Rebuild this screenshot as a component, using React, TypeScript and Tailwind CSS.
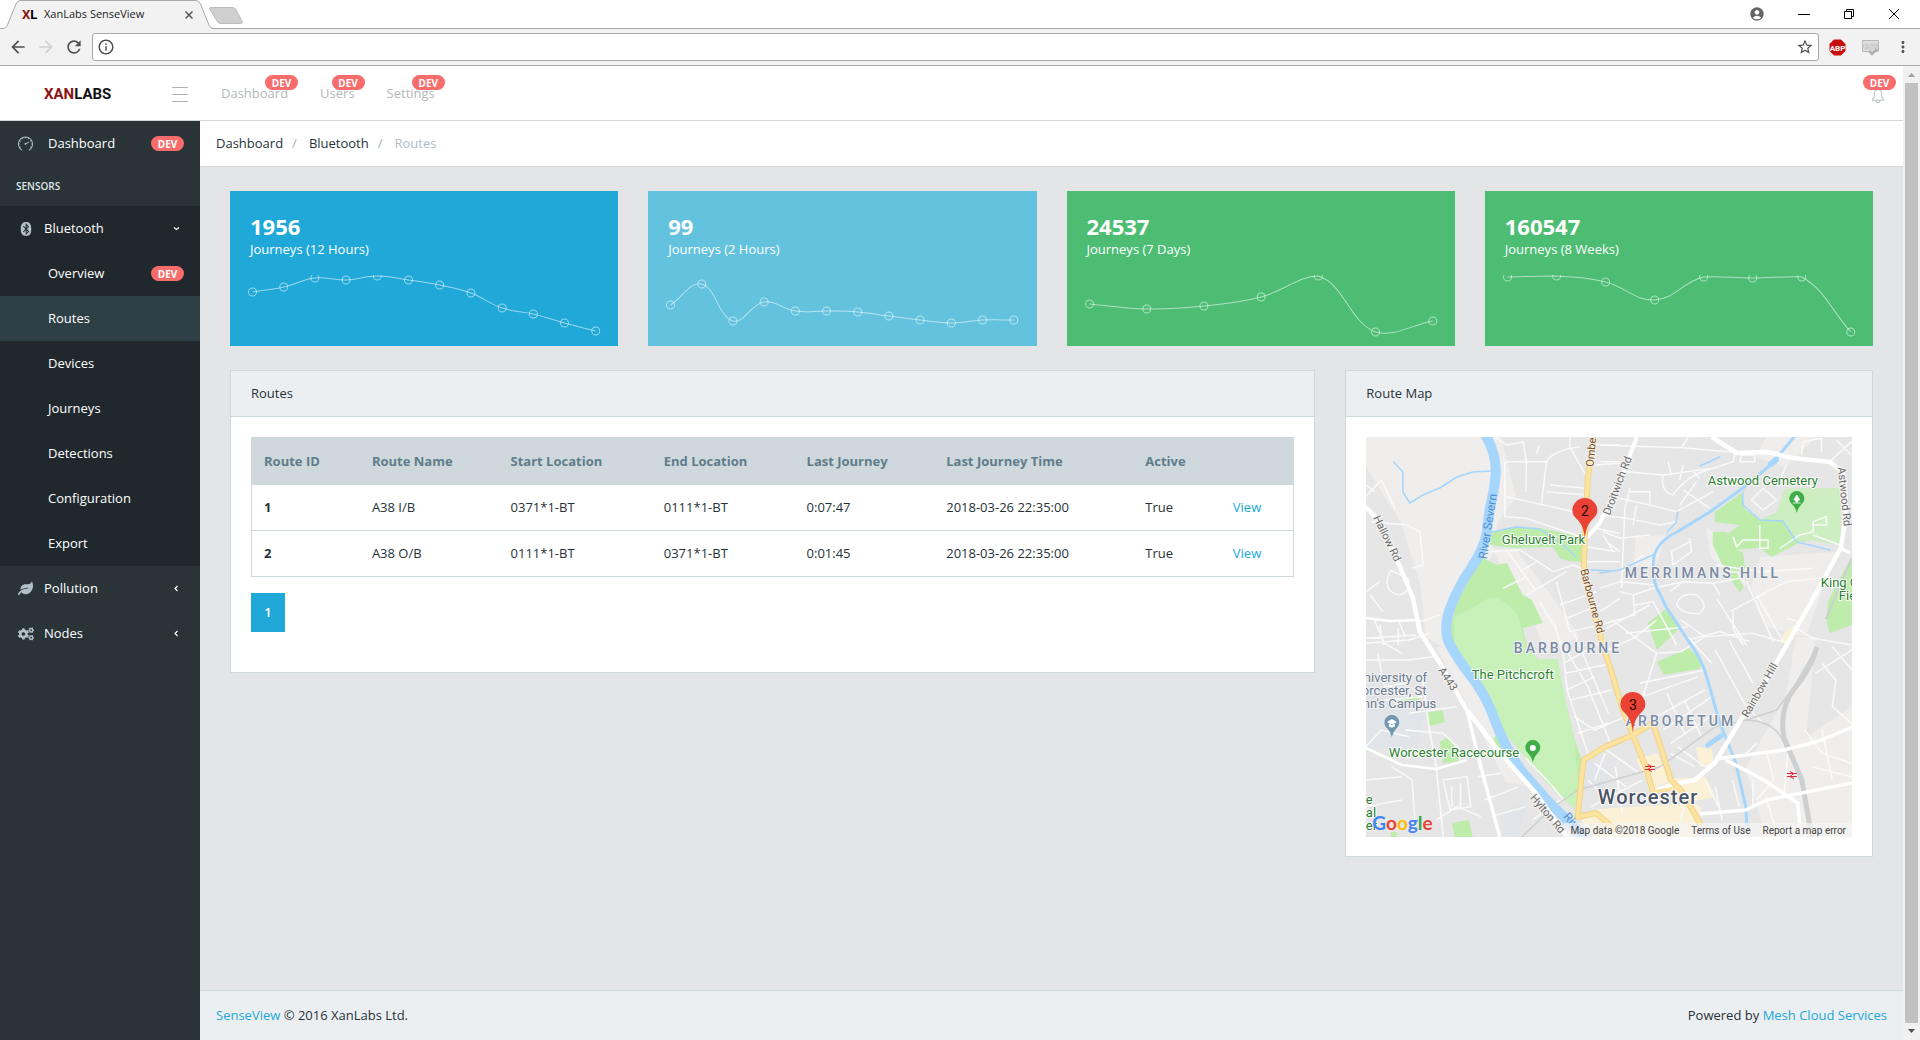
import React from "react";
import { FaBluetooth, FaCogs, FaLeaf } from "react-icons/fa";
import {
  MdAccountCircle,
  MdArrowBack,
  MdArrowForward,
  MdInfoOutline,
  MdMoreVert,
  MdRefresh,
  MdStarBorder,
} from "react-icons/md";
import { SlBell, SlSpeedometer } from "react-icons/sl";

/* ---------- shared ---------- */

function DevBadge() {
  return (
    <span className="flex h-[15px] w-[33px] items-center justify-center rounded-full bg-[#f86c6b] text-[10px] leading-none font-bold text-white">
      DEV
    </span>
  );
}

/* ---------- browser chrome ---------- */

function TabStrip() {
  return (
    <div className="relative flex h-7 items-center bg-white">
      <svg className="absolute top-0 left-0 h-[29px] w-[260px]" viewBox="0 0 260 29" fill="none">
        <path d="M0 28.500H3Q6 28.500 7.500 25L16 4Q17.500 .5 20 .5H196Q199 .5 200.500 4L209 25Q210.500 28.500 213 28.500V29H0Z" fill="#f2f2f2" />
        <path d="M0 28.500H3Q6 28.500 7.500 25L16 4Q17.500 .5 20 .5H196Q199 .5 200.500 4L209 25Q210.500 28.500 213 28.500H260" stroke="#a9a9a9" />
        <path d="M211 7.500H232Q235 7.500 236 9.500L242 21Q243.500 23.500 240.500 23.500H221Q218 23.500 217 21L210 9.500Q208.500 7.500 211 7.500Z" fill="#cfcfcf" stroke="#bcbcbc" />
      </svg>
      <div className="relative flex w-[195px] items-center pt-px pl-[22px] text-[11px] text-[#222]">
        <span className="w-[22px] font-['Roboto',sans-serif] text-[13px] font-bold text-black">
          <span className="text-[#8c1414]">X</span>L
        </span>
        <span className="flex-1">XanLabs SenseView</span>
        <button aria-label="Close tab" className="flex size-3 items-center justify-center">
          <svg viewBox="0 0 8 8" className="size-2" stroke="#555" strokeWidth="1.500">
            <path d="M.5 .5l7 7M7.500 .5l-7 7" />
          </svg>
        </button>
      </div>
      <div className="ml-auto flex items-center gap-[33px] pr-5">
        <button aria-label="Profile">
          <MdAccountCircle className="size-4 text-[#666]" />
        </button>
        <button aria-label="Minimize" className="flex h-4 w-3 items-center">
          <span className="h-px w-full bg-black" />
        </button>
        <button aria-label="Restore">
          <svg viewBox="0 0 12 12" className="size-3" fill="none" stroke="#000">
            <path d="M1.500 3.500h7v7h-7zM3.500 3.500v-2h7v7h-2" />
          </svg>
        </button>
        <button aria-label="Close">
          <svg viewBox="0 0 12 12" className="size-3" stroke="#000">
            <path d="M1 1l10 10M11 1L1 11" />
          </svg>
        </button>
      </div>
    </div>
  );
}

function Toolbar() {
  return (
    <div className="flex h-[38px] items-center border-t border-b border-[#a9a9a9] bg-[#f2f2f2] px-2 text-[#505050]">
      <div className="flex w-[84px] items-center gap-2">
        <button aria-label="Back">
          <MdArrowBack className="size-5" />
        </button>
        <button aria-label="Forward">
          <MdArrowForward className="size-5 text-[#d0d0d0]" />
        </button>
        <button aria-label="Reload">
          <MdRefresh className="size-5" />
        </button>
      </div>
      <div className="flex h-7 flex-1 items-center gap-2 rounded-[3px] border border-[#a9a9a9] bg-white px-1">
        <MdInfoOutline className="size-[18px]" />
        <input aria-label="Address" className="h-full flex-1 text-[13px] outline-none" />
        <button aria-label="Bookmark this page">
          <MdStarBorder className="size-[18px]" />
        </button>
      </div>
      <div className="flex w-[93px] items-center justify-between pl-[10px]">
        <button aria-label="Ad block">
          <svg viewBox="0 0 17 17" className="size-[17px]">
            <path d="M5 .5h7L16.500 5v7L12 16.500H5L.5 12V5Z" fill="#c70d0d" />
            <text x="8.500" y="11.500" textAnchor="middle" fontSize="8" fontWeight="700" fill="#fff" fontFamily="Roboto, sans-serif">
              ABP
            </text>
          </svg>
        </button>
        <button aria-label="Style editor">
          <svg viewBox="0 0 17 17" className="size-[17px]">
            <path d="M.5 1.500h16v11h-4l-3 3-3-3h-6z" fill="#dedede" stroke="#b9b9b9" />
            <path d="M7 12l3 3 6-6" fill="none" stroke="#b0b0b0" strokeWidth="2.500" />
            <text x="8.500" y="9.500" textAnchor="middle" fontSize="8" fontWeight="700" fill="#fff" stroke="#a8a8a8" strokeWidth=".4" fontFamily="Roboto, sans-serif">
              CSS
            </text>
          </svg>
        </button>
        <button aria-label="Menu">
          <MdMoreVert className="size-[18px]" />
        </button>
      </div>
    </div>
  );
}

function Scrollbar() {
  return (
    <div aria-hidden="true" className="flex w-[17px] shrink-0 flex-col items-center bg-[#f1f1f1]">
      <svg viewBox="0 0 17 17" className="size-[17px]">
        <path d="M5 11h7L8.500 7z" fill="#a0a0a0" />
      </svg>
      <div className="w-[13px] flex-1 bg-[#c1c1c1]" />
      <svg viewBox="0 0 17 17" className="size-[17px]">
        <path d="M5 6h7l-3.500 4z" fill="#505050" />
      </svg>
    </div>
  );
}

/* ---------- header ---------- */

const topLinks = ["Dashboard", "Users", "Settings"];

function Header() {
  return (
    <header className="flex h-[55px] items-center border-b border-[#d3d8da] bg-white pt-[2px]">
      <a href="#" className="w-[158px] pl-[44px] font-['Roboto',sans-serif] text-[15px] font-bold text-[#111]">
        <span className="text-[#8c1414]">XAN</span>LABS
      </a>
      <button aria-label="Toggle sidebar" className="ml-[14px] flex w-4 flex-col gap-[6px]">
        <span className="h-px w-full bg-[#aeb4b7]" />
        <span className="h-px w-full bg-[#aeb4b7]" />
        <span className="h-px w-full bg-[#aeb4b7]" />
      </button>
      <nav className="flex gap-8 pl-[33px]">
        {topLinks.map((label) => (
          <a key={label} href="#" className="relative text-[#b3b8ba]">
            {label}
            <span className="absolute -top-[9px] left-full -ml-[23px]">
              <DevBadge />
            </span>
          </a>
        ))}
      </nav>
      <button aria-label="Notifications" className="relative mr-[18px] ml-auto flex h-5 items-center pt-[3px]">
        <SlBell className="size-[14px] text-[#b9bec0]" />
        <span className="absolute -top-[9px] -right-[11px]">
          <DevBadge />
        </span>
      </button>
    </header>
  );
}

/* ---------- sidebar ---------- */

const subItems = [
  { label: "Overview", dev: true },
  { label: "Routes", active: true },
  { label: "Devices" },
  { label: "Journeys" },
  { label: "Detections" },
  { label: "Configuration" },
  { label: "Export" },
];

function Chevron({ open }: { open?: boolean }) {
  return (
    <svg viewBox="0 0 7 7" className="size-[7px]" fill="none" stroke="#fff" strokeWidth="1.200">
      <path d={open ? "M1 2.500l2.500 2 2.500-2" : "M4.500 1l-2.500 2.500 2.500 2.500"} />
    </svg>
  );
}

function Group({ icon, label, open }: { icon: React.ReactNode; label: string; open?: boolean }) {
  return (
    <button className="flex h-[45px] w-full items-center pr-5 pl-[18px] text-left">
      <span className="flex w-[26px] items-center text-[#b4c0c8]">{icon}</span>
      <span className="flex-1">{label}</span>
      <Chevron open={open} />
    </button>
  );
}

function Sidebar() {
  return (
    <aside className="w-[200px] shrink-0 bg-[#293338] text-white">
      <a href="#" className="flex h-[45px] items-center pr-4 pl-[18px]">
        <span className="w-[30px] text-[#b4c0c8]">
          <SlSpeedometer className="size-[15px]" />
        </span>
        <span className="flex-1">Dashboard</span>
        <DevBadge />
      </a>
      <h2 className="flex h-10 items-center px-4 text-[10px] font-semibold text-[#dfe5e8]">SENSORS</h2>
      <div className="bg-[#20282d]">
        <Group icon={<FaBluetooth className="ml-px size-[14px]" />} label="Bluetooth" open />
        {subItems.map((item) => (
          <a
            key={item.label}
            href="#"
            className={
              item.active
                ? "flex h-[45px] items-center justify-between bg-[#2f3f46] pr-4 pl-12"
                : "flex h-[45px] items-center justify-between pr-4 pl-12"
            }
          >
            {item.label}
            {item.dev && <DevBadge />}
          </a>
        ))}
      </div>
      <Group icon={<FaLeaf className="size-[15px]" />} label="Pollution" />
      <Group icon={<FaCogs className="size-4" />} label="Nodes" />
    </aside>
  );
}

/* ---------- stat cards ---------- */

type Stat = { value: string; label: string; tone: string; points: number[] };

const stats: Stat[] = [
  { value: "1956", label: "Journeys (12 Hours)", tone: "bg-[#20a8d8]", points: [17, 12, 3, 5, 1, 5, 10, 18, 33, 39, 48, 56] },
  { value: "99", label: "Journeys (2 Hours)", tone: "bg-[#63c2de]", points: [30, 9, 46, 27, 36, 36, 37, 41, 45, 48, 45, 45] },
  { value: "24537", label: "Journeys (7 Days)", tone: "bg-[#4dbd74]", points: [29, 34, 31, 22, 1, 57, 46] },
  { value: "160547", label: "Journeys (8 Weeks)", tone: "bg-[#4dbd74]", points: [2, 1, 7, 25, 2, 3, 2, 57] },
];

function smoothPath(pts: { x: number; y: number }[]) {
  const tension = 0.4;
  const clamp = (y: number) => Math.max(1, Math.min(62, y));
  const handles = pts.map((p, i) => {
    const prev = pts[i - 1] ?? p;
    const next = pts[i + 1] ?? p;
    const d01 = Math.hypot(p.x - prev.x, p.y - prev.y);
    const d12 = Math.hypot(next.x - p.x, next.y - p.y);
    const fa = (tension * d01) / (d01 + d12);
    const fb = (tension * d12) / (d01 + d12);
    return {
      inX: p.x - fa * (next.x - prev.x),
      inY: clamp(p.y - fa * (next.y - prev.y)),
      outX: p.x + fb * (next.x - prev.x),
      outY: clamp(p.y + fb * (next.y - prev.y)),
    };
  });
  return pts
    .map((p, i) =>
      i === 0
        ? `M${p.x} ${p.y}`
        : `C${handles[i - 1].outX} ${handles[i - 1].outY} ${handles[i].inX} ${handles[i].inY} ${p.x} ${p.y}`,
    )
    .join("");
}

function StatCard({ stat }: { stat: Stat }) {
  const step = 343 / (stat.points.length - 1);
  const pts = stat.points.map((y, i) => ({ x: 2.5 + i * step, y }));
  return (
    <section className={`${stat.tone} px-5 pt-5 pb-px text-white`}>
      <h3 className="text-[22px] leading-[30px] font-bold">{stat.value}</h3>
      <p className="leading-4 font-medium">{stat.label}</p>
      <svg viewBox="0 0 348 70" className="mt-[18px] block w-full overflow-visible" fill="none" stroke="#fff" strokeOpacity=".55">
        <clipPath id={`clip-${stat.value}`}>
          <rect x="-6" y="0" width="360" height="70" />
        </clipPath>
        <g clipPath={`url(#clip-${stat.value})`}>
          <path d={smoothPath(pts)} />
          {pts.map((p) => (
            <circle key={p.x} cx={p.x} cy={p.y} r="4" />
          ))}
        </g>
      </svg>
    </section>
  );
}

/* ---------- routes table ---------- */

const columns = [
  { label: "Route ID", width: "w-[10.400%]" },
  { label: "Route Name", width: "w-[13.300%]" },
  { label: "Start Location", width: "w-[14.700%]" },
  { label: "End Location", width: "w-[13.700%]" },
  { label: "Last Journey", width: "w-[13.400%]" },
  { label: "Last Journey Time", width: "w-[19.100%]" },
  { label: "Active", width: "w-[8.400%]" },
];

const rows = [
  ["1", "A38 I/B", "0371*1-BT", "0111*1-BT", "0:07:47", "2018-03-26 22:35:00", "True"],
  ["2", "A38 O/B", "0111*1-BT", "0371*1-BT", "0:01:45", "2018-03-26 22:35:00", "True"],
];

function RoutesPanel() {
  return (
    <section className="col-span-8 self-start border border-[#cfd8dc] bg-white">
      <h2 className="border-b border-[#cfd8dc] bg-[#eceff1] px-5 py-[13px] leading-[19px]">Routes</h2>
      <div className="px-5 pt-5 pb-10">
        <table className="w-full table-fixed border-collapse border border-[#cfd8dc] text-left">
          <thead className="bg-[#cfd8dc] text-[#607d8b]">
            <tr className="h-[47px]">
              {columns.map((c) => (
                <th key={c.label} scope="col" className={`${c.width} px-3 font-bold`}>
                  {c.label}
                </th>
              ))}
              <th aria-label="Actions" />
            </tr>
          </thead>
          <tbody>
            {rows.map((row) => (
              <tr key={row[0]} className="h-[46px] border-b border-[#cfd8dc]">
                <th scope="row" className="px-3 font-bold">
                  {row[0]}
                </th>
                {row.slice(1).map((cell, i) => (
                  <td key={i} className="px-3">
                    {cell}
                  </td>
                ))}
                <td className="px-3">
                  <a href="#" className="text-[#20a8d8]">
                    View
                  </a>
                </td>
              </tr>
            ))}
          </tbody>
        </table>
        <button aria-current="page" className="mt-4 block h-[39px] w-[34px] bg-[#20a8d8] font-semibold text-white">
          1
        </button>
      </div>
    </section>
  );
}

/* ---------- map ---------- */

const parks = [
  "M126 95L147 90 174 91 207 98 219 101 217 125 203 124 194 121 187 110 147 111 124 108Z",
  "M117 121L131 128 141 126 157 158 166 163 177 186 157 191 161 208 172 222 192 222 194 236 200 266 208 300 217 326 213 350 209 372 181 346 162 323 139 296 129 270 112 243 89 213 84 195 92 161 104 138Z",
  "M349 75L376 56 379 72 394 83 411 76 419 52 474 51 475 108 445 103 431 107 406 120 394 111 367 113 361 98 374 88 349 85Z",
  "M347 95L361 95 367 111 377 115 380 135 359 133 347 108Z",
  "M364 136H371L378 150 374 155 367 145Z",
  "M486 121L480 130 462 165 461 186 464 196 486 188Z",
  "M282 186L301 171 314 191 291 213Z",
  "M291 225L323 211 337 226 333 232 298 238Z",
  "M60 276L77 273 79 285 64 289Z",
  "M74 305L82 300 91 313 93 325 77 326Z",
  "M86 386L103 383 107 400H89Z",
  "M25 395H31V400H25Z",
  "M128 300L134 298 140 316 128 306Z",
  "M34 263L52 258 53 264 40 266Z",
];

const brooks =
  "M28 25L37 35 37 55 44 66 57 58 74 51 91 40 107 35 126 34M377 55V68L394 83 417 84 431 105 464 113M334 29L354 20M312 75L310 86 301 95M234 136L254 133 289 117M126 95L150 90 174 92 190 103 200 110 210 120M225 133L250 134";

const streetsNorthWest =
  "M78 395L125 345 165 430M78 360L105 380M95 470L200 480 240 500 250 600 215 610M150 620Q125 680 180 690Q215 680 205 640L150 615M90 690L130 740M78 680L120 650M175 790V840M120 780L130 840M78 820L230 810M240 770L300 750M495 290V455L560 460 735 520M500 395L700 440M560 290L558 380M495 290H620M605 415L620 290Q640 255 720 245M690 216V245L740 335M500 240L550 230 560 290M620 380L740 390M630 360L735 370M450 560L540 555 640 620 700 600 735 615M500 555L590 680M540 620L590 590M490 670L560 635M560 690L680 620M650 650L690 800 780 780M660 720L770 680M680 760L780 720M600 710L640 780M735 590L840 590M740 545L830 560M765 490L840 505M790 510L820 560M770 240H840M765 300L840 295M465 216L500 240M590 265L600 240";

const streetsNorthEast =
  "M0 240L250 248 400 262M0 290H60M80 320L190 330 340 310 400 290 405 265M190 330Q180 380 220 390Q260 330 340 310M245 248L265 216M90 370L75 430 65 670M60 400L150 420 230 440 340 380M150 420V380H90M0 450L80 460 180 480 230 470M10 500L60 520 150 510M20 530L60 560M0 670L60 650L170 660M60 680L100 690 105 750 0 780M100 690L160 670 250 650 340 655 420 640M105 720L160 710 230 840M210 680L250 650M230 720Q240 680 290 690Q330 720 300 745Q250 750 230 720M340 655L360 690M350 700L440 840M390 740L560 650 660 640M440 650L520 830M400 740V790L430 840M470 690L550 830M350 600L480 620 640 610M455 405L490 370 530 405 490 435ZM480 480V550H505V525H430L410 545 400 515M540 550L600 510 640 500V470L680 455V480H640M640 510L720 540M605 270L610 230 665 220V260M690 290L755 230M710 225L755 270M560 300L540 345M420 290H465V270H425ZM270 520L275 560 220 600 215 560 270 530M205 290L215 330M250 300L240 345M280 320L300 340M250 375L330 430M240 420L290 350M0 740L60 700M20 790L150 720M110 420L100 480M130 570L65 620M265 825L360 800 450 830M590 790L640 820 755 840M560 760L600 770";

const streetsSouth =
  "M75 70L200 60 260 40M100 0L130 70 180 100M170 0L190 50M75 120H200L270 110M110 100L130 200 190 190M130 240L240 230M75 380L120 330 200 350M240 170L260 330 280 440 300 650M200 280L340 260M190 330L300 340 360 400M150 440L210 480 220 640M75 480L180 470M300 480L370 470 380 560 320 570ZM325 500V560M350 490V560M400 470L470 460M420 540L520 500M280 600L340 560 410 590M440 590L540 560M75 560L180 540M620 0L650 110 660 210 720 400M640 60L720 200 790 380M680 40L780 280M650 130L770 60M655 160L790 130M660 210L740 170M670 240L790 210M680 290L740 330 830 290M690 340L780 310M790 0L920 100 880 230M830 40L1010 20M780 90L860 50 920 0M920 100L990 95 1060 50 1200 40 1300 70M1060 50L990 0M1010 50L1080 130M1090 90L1180 260 1230 310M1130 60L1200 190M870 190L1060 150M880 230L1040 170M920 290L1060 210M940 330L1080 230M960 370L1090 280M1000 240L1050 350M950 220L1000 340M960 400L1030 440M980 380L1060 440 1090 430M1400 130L1440 180 1430 260 1487 310M1380 160L1487 90M1430 80L1487 150M1400 330L1430 480M1350 330L1400 400 1487 430M1370 440L1487 470M1140 480L1160 560M1200 480V560M1090 500L1110 600M1060 480L1100 560M1240 540L1260 610M1000 560L980 640M1180 400L1210 370M1240 400L1260 480 1210 540M1300 400L1290 520M720 480L760 520M740 430L830 500M760 380L870 460M800 440L820 580M730 560L880 480M770 400L740 480M540 415L610 490 650 540M640 540L560 600";

function Label({ x, y, rotate, fill, children }: { x: number; y: number; rotate: number; fill: string; children: string }) {
  return (
    <text transform={`translate(${x} ${y}) rotate(${rotate})`} textAnchor="middle" fontSize="11" fill={fill} stroke="#f4f3f1" strokeWidth="2" paintOrder="stroke">
      {children}
    </text>
  );
}

function PlacePin({ x, y, fill, children }: { x: number; y: number; fill: string; children?: React.ReactNode }) {
  return (
    <g transform={`translate(${x} ${y})`}>
      <path d="M0 20Q-1 15-4.500 11.500A7.500 7.500 0 1 1 4.500 11.500Q1 15 0 20Z" fill={fill} transform="translate(0 -6)" />
      {children}
    </g>
  );
}

function Marker({ x, y, label }: { x: number; y: number; label: string }) {
  return (
    <g transform={`translate(${x} ${y})`}>
      <path d="M0 0C-1-12-4-16-8-20Q-12.500-24-12.500-28.500A12.500 12.500 0 0 1 12.500-28.500Q12.500-24 8-20C4-16 1-12 0 0Z" fill="#ea4335" />
      <text y="-23" textAnchor="middle" fontSize="14" fill="#2a0503">
        {label}
      </text>
    </g>
  );
}

function Station({ x, y }: { x: number; y: number }) {
  return (
    <g transform={`translate(${x} ${y})`} stroke="#e0293a" fill="none">
      <path d="M-5-1.500H5M-5 1.500H5" strokeWidth="1.200" />
      <path d="M-2-3.500L2-1.500-2 1.500 2 3.500" strokeWidth="1" />
    </g>
  );
}

function MapDrawing() {
  return (
    <svg
      role="img"
      aria-label="Map of Worcester"
      viewBox="0 0 486 400"
      preserveAspectRatio="xMidYMid slice"
      className="absolute inset-0 size-full font-['Roboto',sans-serif]"
      fill="none"
    >
      <rect width="486" height="400" fill="#e6e6e6" />
      {/* open land */}
      <g fill="#f0eeec">
        <path d="M0 0H135L150 60 132 85 126 120 78 180 80 212 60 200 55 150 35 85 0 30Z" />
        <path d="M85 210L165 350 140 345 100 265 70 210Z" />
        <path d="M125 112L150 112 190 165 214 200 180 215 160 165Z" />
        <path d="M400 0H450L420 30 390 20ZM340 90L375 110 380 150 345 120Z" />
        <path d="M395 120L470 115 440 200 400 190 385 150ZM270 100L300 98 290 130 268 128Z" />
        <path d="M430 200L450 200 440 300 486 270V400H400L380 330 420 260Z" />
      </g>
      {/* campus and hospital */}
      <g fill="#e1e5e9">
        <path d="M0 245L35 240 58 280 52 310 0 312Z" />
        <path d="M222 322L245 330 240 352 218 350ZM135 375L160 365 155 395 140 400Z" />
      </g>
      {/* town centre */}
      <g fill="#fbf1d6">
        <path d="M215 384L232 372 330 366 336 372 330 386 334 400H226ZM270 322L292 316 303 345 285 352ZM300 342L340 340 350 360 316 366ZM418 196L430 188 424 206 416 206ZM330 310L346 312 348 326 334 330Z" />
      </g>
      <g fill="#bdecab">
        {parks.map((d) => (
          <path key={d} d={d} />
        ))}
      </g>
      <path d="M112 168Q130 150 152 178L160 208 172 222 192 222 194 236 208 300 213 350 209 372 181 346 139 296 129 270 112 243 89 213 88 180Z" fill="#c8f0b9" />
      <path d="M410 78L419 52 474 51 475 108 445 103 431 107 417 84 394 82Z" fill="#cdeec0" />

      {/* local streets */}
      <g stroke="#fafafa" strokeWidth="4.500" strokeLinejoin="round">
        <path transform="translate(-26 -72) scale(.3333)" d={streetsNorthWest} />
        <path transform="translate(234 -72) scale(.3333)" d={streetsNorthEast} />
        <path transform="translate(-26 183) scale(.3444 .3333)" d={streetsSouth} />
      </g>

      {/* railway */}
      <g stroke="#cdcfd1" strokeLinejoin="round">
        <path d="M156 400L185 372 212 353 294 330 349 290 380 283 411 273 428 250 451 210" strokeWidth="1.500" />
        <path d="M380 283Q410 284 418 306L435 343 446 400" strokeWidth="1.500" />
        <path d="M451 210Q445 232 430 250 413 270 418 300L436 343 446 400" strokeWidth="5" />
        <path d="M486 121L460 182" strokeWidth="2" />
      </g>

      {/* water */}
      <g stroke="#a6d6fb" strokeLinejoin="round" strokeLinecap="round">
        <path d="M119 -3Q130 15 130 35 129 50 126 62 122 80 121 95 119 110 106 130 92 150 84 172 78 188 82 203 88 217 108 243 122 262 130 286 140 312 155 333L181 363 226 408" strokeWidth="10" />
        <path d="M428 0L407 26 377 51 344 75 311 95Q292 104 288 120 286 140 291 151L301 171 322 203Q336 222 341 240L353 283 370 326 380 370 381 388" strokeWidth="3" />
        <path d={brooks} strokeWidth="1.500" />
        <path d="M355 299L342 308" strokeWidth="5" />
        <path d="M405 27L410 23" strokeWidth="6" />
      </g>

      {/* main streets */}
      <g stroke="#fff" strokeWidth="3.500" strokeLinejoin="round">
        <path d="M0 70L14 85 32 125 47 161 54 195 74 226 101 273 132 313 170 356 194 390 202 400" strokeWidth="4.500" />
        <path d="M101 273L115 330 134 400" />
        <path d="M0 181L24 184 54 183M0 311L36 328 70 332 101 323" strokeWidth="2.500" />
        <path d="M271 0L254 45 234 86 219 103" strokeWidth="4" />
        <path d="M346 0L371 16 401 15 427 21 464 25 477 35 480 60 479 85 475 111 451 155 421 208 398 246 373 286 349 326 329 343 305 348 288 354" strokeWidth="4.500" />
        <path d="M349 322L418 313 450 305 487 290M360 323L398 343 432 366 434 388M334 377L380 373 401 363 486 346M475 111L484 116" />
      </g>

      {/* A roads */}
      <g strokeLinejoin="round" strokeLinecap="round">
        {[
          { stroke: "#f0d387", width: 6 },
          { stroke: "#fce4a0", width: 4 },
        ].map((s) => (
          <g key={s.stroke} stroke={s.stroke} strokeWidth={s.width}>
            <path d="M229 -4L222 41 221 61 219 101 218 128 224 161 237 208 246 236 256 270 267 298 280 330 287 355" />
            <path d="M334 386L315 353 305 343 296 313 287 286 267 298 239 310 218 323 215 346 212 380 230 376 249 392" />
            <path d="M287 355L312 351" strokeWidth="3" />
          </g>
        ))}
      </g>

      {/* road names */}
      <Label x={18} y={103} rotate={64} fill="#6b6b6b">Hallow Rd</Label>
      <Label x={79} y={244} rotate={56} fill="#6b6b6b">A443</Label>
      <Label x={255} y={50} rotate={-69} fill="#6b6b6b">Droitwich Rd</Label>
      <Label x={475} y={60} rotate={84} fill="#6b6b6b">Astwood Rd</Label>
      <Label x={397} y={255} rotate={-60} fill="#6b6b6b">Rainbow Hill</Label>
      <Label x={179} y={379} rotate={50} fill="#6b6b6b">Hylton Rd</Label>
      <Label x={230} y={4} rotate={-85} fill="#7a4a12">Ombersley</Label>
      <Label x={223} y={165} rotate={75} fill="#7a4a12">Barbourne Rd</Label>
      <text transform="translate(126 90) rotate(-81)" textAnchor="middle" fontSize="12" fill="#4f8fd0">
        River Severn
      </text>
      <text transform="translate(197 380) rotate(48)" fontSize="12" fill="#4f8fd0">
        River
      </text>

      {/* places */}
      <g fill="#2b8030" fontSize="13" stroke="#fff" strokeWidth="2" paintOrder="stroke">
        <text x="136" y="107">Gheluvelt Park</text>
        <text x="342" y="48">Astwood Cemetery</text>
        <text x="455" y="150">King George's</text>
        <text x="473" y="163">Field</text>
        <text x="106" y="242">The Pitchcroft</text>
        <text x="23" y="320">Worcester Racecourse</text>
        <text x="0" y="367">e</text>
        <text x="0" y="380">al</text>
        <text x="0" y="393">er</text>
      </g>
      <g fill="#6b7c90" fontSize="13" stroke="#f3f3f3" strokeWidth="2" paintOrder="stroke">
        <text x="-2" y="245">niversity of</text>
        <text x="-4" y="258">orcester, St</text>
        <text x="-3" y="271">nn's Campus</text>
      </g>
      <g fill="#7a8aa5" fontSize="14" fontWeight="500" stroke="#f3f3f3" strokeWidth="2" paintOrder="stroke" className="tracking-[3px]">
        <text x="259" y="141">MERRIMANS HILL</text>
        <text x="148" y="216">BARBOURNE</text>
        <text x="260" y="289">ARBORETUM</text>
      </g>
      <text x="232" y="367" fill="#4b5466" fontSize="20" fontWeight="500" stroke="#fff" strokeWidth="2" paintOrder="stroke" className="tracking-[1px]">
        Worcester
      </text>

      <PlacePin x={431} y={62} fill="#3fae49">
        <path d="M0-4l3 5h-2v2h-2v-2h-2zM-4 4h8" fill="#fff" stroke="#fff" strokeWidth=".8" />
      </PlacePin>
      <PlacePin x={167} y={311} fill="#3fae49">
        <circle r="3" fill="#fff" />
      </PlacePin>
      <PlacePin x={26} y={286} fill="#7296ad">
        <path d="M-5-1L0-4l5 3-5 3zM-3 1v2.500q3 2 6 0V1" fill="#fff" />
      </PlacePin>
      <Station x={284} y={331} />
      <Station x={426} y={338} />
      <Marker x={219} y={102} label="2" />
      <Marker x={267} y={296} label="3" />
    </svg>
  );
}

function MapPanel() {
  return (
    <section className="col-span-4 self-start border border-[#cfd8dc] bg-white">
      <h2 className="border-b border-[#cfd8dc] bg-[#eceff1] px-5 py-[13px] leading-[19px]">Route Map</h2>
      <div className="px-5 pt-5 pb-[19px]">
        <div className="relative h-[400px] overflow-hidden font-['Roboto',sans-serif]">
          <MapDrawing />
          <a
            href="#"
            aria-label="Google"
            className="absolute bottom-0 left-[6px] font-['Lato',sans-serif] text-[19px] leading-[28px] font-bold"
          >
            <span className="text-[#4285f4]">G</span>
            <span className="text-[#ea4335]">o</span>
            <span className="text-[#fbbc05]">o</span>
            <span className="text-[#4285f4]">g</span>
            <span className="text-[#34a853]">l</span>
            <span className="text-[#ea4335]">e</span>
          </a>
          <div className="absolute right-0 bottom-0 flex h-[14px] items-center gap-3 bg-[#f5f5f5]/70 px-[6px] text-[10px] text-[#444]">
            <span>Map data ©2018 Google</span>
            <a href="#">Terms of Use</a>
            <a href="#">Report a map error</a>
          </div>
        </div>
      </div>
    </section>
  );
}

/* ---------- page ---------- */

export default function App() {
  return (
    <div className="flex min-h-screen flex-col bg-[#e4e5e6] font-['Open_Sans',sans-serif] text-[13px] text-[#263238]">
      <TabStrip />
      <Toolbar />
      <div className="flex flex-1">
        <div className="flex min-w-0 flex-1 flex-col">
          <Header />
          <div className="flex flex-1">
            <Sidebar />
            <div className="flex min-w-0 flex-1 flex-col">
              <nav aria-label="Breadcrumb" className="flex h-[46px] items-center gap-[9px] border-b border-[#d3d8da] bg-white px-4">
                <a href="#">Dashboard</a>
                <span className="pr-[3px] text-[#a4b0b6]">/</span>
                <a href="#">Bluetooth</a>
                <span className="pr-[3px] text-[#a4b0b6]">/</span>
                <span className="text-[#b0bec5]">Routes</span>
              </nav>
              <main className="flex-1 px-[30px] pt-6">
                <div className="grid grid-cols-4 gap-[30px]">
                  {stats.map((s) => (
                    <StatCard key={s.value} stat={s} />
                  ))}
                </div>
                <div className="mt-6 grid grid-cols-12 gap-x-[30px]">
                  <RoutesPanel />
                  <MapPanel />
                </div>
              </main>
              <footer className="flex h-[50px] items-center justify-between border-t border-[#cfd8dc] bg-[#eceff1] px-4">
                <p>
                  <a href="#" className="text-[#20a8d8]">SenseView</a> © 2016 XanLabs Ltd.
                </p>
                <p>
                  Powered by{" "}
                  <a href="#" className="text-[#20a8d8]">Mesh Cloud Services</a>
                </p>
              </footer>
            </div>
          </div>
        </div>
        <Scrollbar />
      </div>
    </div>
  );
}
